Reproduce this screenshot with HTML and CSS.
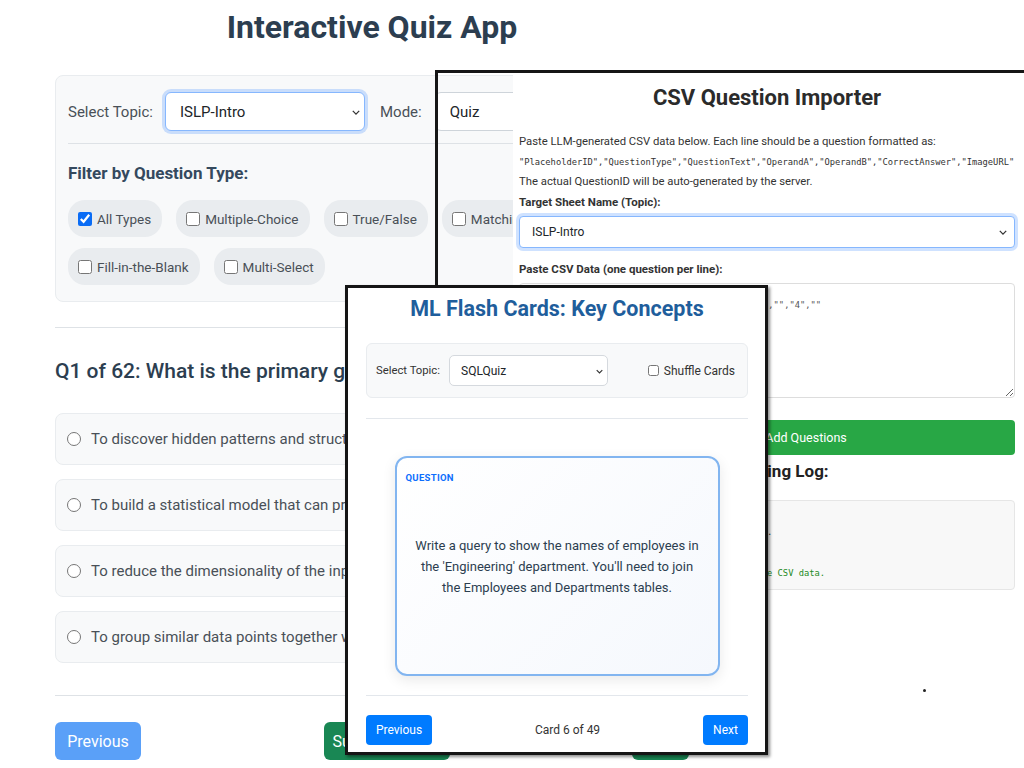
FILE: index.html
```html
<!DOCTYPE html>
<html lang="en">
<head>
<meta charset="utf-8">
<title>Interactive Quiz App</title>
<link rel="stylesheet" href="styles.css">
</head>
<body>
<main class="quiz-app">
  <h1 class="quiz-title">Interactive Quiz App</h1>
  <section class="quiz-controls">
    <div class="control-row">
      <label class="control-label" for="topic">Select Topic:</label>
      <div class="select-wrap topic-select">
        <select id="topic" class="select is-focused"><option>ISLP-Intro</option></select>
        <svg class="chevron" viewBox="0 0 10 6" width="8" height="5"><path d="M1 1l4 4 4-4" fill="none" stroke="#333" stroke-width="1.6"/></svg>
      </div>
      <label class="control-label mode-label" for="mode">Mode:</label>
      <div class="select-wrap mode-select">
        <select id="mode" class="select"><option>Quiz</option></select>
      </div>
    </div>
    <hr class="divider">
    <h2 class="filter-title">Filter by Question Type:</h2>
    <div class="chips">
      <label class="chip"><input type="checkbox" checked>All Types</label>
      <label class="chip"><input type="checkbox">Multiple-Choice</label>
      <label class="chip"><input type="checkbox">True/False</label>
      <label class="chip"><input type="checkbox">Matching</label>
      <label class="chip"><input type="checkbox">Fill-in-the-Blank</label>
      <label class="chip"><input type="checkbox">Multi-Select</label>
    </div>
  </section>
  <hr class="divider section-divider">
  <h2 class="question-title">Q1 of 62: What is the primary goal of unsupervised learning?</h2>
  <ul class="options">
    <li class="option"><input type="radio" name="answer"><span>To discover hidden patterns and structures in unlabeled data</span></li>
    <li class="option"><input type="radio" name="answer"><span>To build a statistical model that can predict an output from inputs</span></li>
    <li class="option"><input type="radio" name="answer"><span>To reduce the dimensionality of the input features</span></li>
    <li class="option"><input type="radio" name="answer"><span>To group similar data points together without labels</span></li>
  </ul>
  <hr class="divider nav-divider">
  <div class="quiz-nav">
    <button class="btn btn-prev" disabled>Previous</button>
    <button class="btn btn-submit">Submit Answer</button>
    <button class="btn btn-next">Next</button>
  </div>
</main>

<section class="csv-window">
  <div class="csv-sheet">
    <h1 class="csv-title">CSV Question Importer</h1>
    <p class="csv-text first">Paste LLM-generated CSV data below. Each line should be a question formatted as:</p>
    <code class="csv-format">"PlaceholderID","QuestionType","QuestionText","OperandA","OperandB","CorrectAnswer","ImageURL"</code>
    <p class="csv-text">The actual QuestionID will be auto-generated by the server.</p>
    <label class="csv-label" for="sheet">Target Sheet Name (Topic):</label>
    <div class="select-wrap csv-select-wrap">
      <select id="sheet" class="select csv-select is-focused"><option>ISLP-Intro</option></select>
      <svg class="chevron" viewBox="0 0 10 6" width="8" height="5"><path d="M1 1l4 4 4-4" fill="none" stroke="#333" stroke-width="1.6"/></svg>
    </div>
    <label class="csv-label second" for="csvdata">Paste CSV Data (one question per line):</label>
    <textarea id="csvdata" class="csv-textarea">"1","Fill-in-the-Blank","What is 2 + 2 = ?","","","4",""</textarea>
    <button class="csv-btn">Validate and Add Questions</button>
    <h2 class="csv-log-title">Processing Log:</h2>
    <div class="csv-log"><div>[INFO] Importer initialized. Awaiting input...</div><div>&nbsp;</div><div class="log-ok">Waiting for input... Please paste and validate CSV data.</div></div>
    <span class="speck"></span>
  </div>
</section>

<section class="flash-window">
  <h1 class="flash-title">ML Flash Cards: Key Concepts</h1>
  <div class="flash-controls">
    <div class="flash-topic">
      <label for="ftopic">Select Topic:</label>
      <div class="select-wrap flash-select-wrap">
        <select id="ftopic" class="select flash-select"><option>SQLQuiz</option></select>
        <svg class="chevron" viewBox="0 0 10 6" width="7" height="5"><path d="M1 1l4 4 4-4" fill="none" stroke="#333" stroke-width="1.6"/></svg>
      </div>
    </div>
    <label class="shuffle"><input type="checkbox">Shuffle Cards</label>
  </div>
  <hr class="flash-divider">
  <article class="flashcard">
    <span class="card-badge">QUESTION</span>
    <p class="card-text">Write a query to show the names of employees in the 'Engineering' department. You'll need to join the Employees and Departments tables.</p>
  </article>
  <hr class="flash-divider bottom">
  <div class="flash-nav">
    <button class="flash-btn prev">Previous</button>
    <span class="card-count">Card 6 of 49</span>
    <button class="flash-btn next">Next</button>
  </div>
</section>
</body>
</html>
```

FILE: styles.css
```css
* { box-sizing: border-box; }
html, body { margin: 0; padding: 0; }
body {
  width: 1024px;
  height: 768px;
  overflow: hidden;
  position: relative;
  background: #ffffff;
  font-family: Roboto, "Noto Sans", "Liberation Sans", sans-serif;
  color: #2c3e50;
}
input, select, textarea, button { font: inherit; color: inherit; margin: 0; }

/* ---------- Quiz app (background) ---------- */
.quiz-app { width: 634px; margin-left: 55px; }
.quiz-title {
  margin: 0;
  padding-top: 8px;
  font-size: 32px;
  line-height: 38px;
  font-weight: 700;
  text-align: center;
  color: #2c3e50;
}
.quiz-controls {
  margin-top: 29px;
  background: #f8f9fa;
  border: 1px solid #e9ecef;
  border-radius: 8px;
  padding: 16px 12px;
}
.control-row { display: flex; align-items: center; height: 39px; }
.control-label { font-size: 15px; color: #495057; white-space: nowrap; }
.select-wrap { position: relative; }
.topic-select { width: 200px; margin-left: 12px; }
.topic-select .chevron { right: 5px; }
.mode-label { margin-left: 15px; }
.mode-select { flex: 1; margin-left: 13px; }
.select {
  appearance: none;
  -webkit-appearance: none;
  display: block;
  width: 100%;
  height: 39px;
  border: 1px solid #ced4da;
  border-radius: 6px;
  background: #ffffff;
  padding: 0 28px 0 14px;
  font-size: 15px;
  color: #212529;
}
.is-focused { border-color: #86b7fe; box-shadow: 0 0 0 3px rgba(13, 110, 253, 0.2); }
.chevron { position: absolute; right: 8px; top: 50%; margin-top: -2px; }

.divider { border: 0; border-top: 1px solid #dee2e6; margin: 12px 0 0; height: 0; }
.filter-title {
  margin: 18px 0 0;
  font-size: 17px;
  line-height: 22px;
  font-weight: 700;
  color: #34495e;
}
.chips { display: flex; flex-wrap: wrap; gap: 11px 14px; margin-top: 16px; }
.chip {
  height: 37px;
  display: inline-flex;
  align-items: center;
  gap: 5px;
  padding: 0 11px 0 10px;
  background: #e9ecef;
  border-radius: 17px;
  font-size: 13.5px;
  color: #495057;
}
.chip input { width: 14px; height: 14px; accent-color: #0a6cf5; }

.section-divider { margin-top: 25px; }
.question-title {
  margin: 29px 0 0;
  font-size: 21px;
  line-height: 28px;
  font-weight: 500;
  color: #2c3e50;
  white-space: nowrap;
}
.options { list-style: none; margin: 28px 0 0; padding: 0; display: flex; flex-direction: column; gap: 14px; }
.option {
  height: 52px;
  display: flex;
  align-items: center;
  gap: 10px;
  padding-left: 11px;
  background: #f8f9fa;
  border: 1px solid #e9ecef;
  border-radius: 8px;
  font-size: 15px;
  color: #495057;
  white-space: nowrap;
}
.option input { width: 14px; height: 14px; flex: none; }
.nav-divider { margin-top: 32px; }
.quiz-nav { display: flex; justify-content: space-between; margin-top: 26px; }
.btn {
  height: 38px;
  border: 0;
  border-radius: 6px;
  color: #ffffff;
  font-size: 16px;
  padding: 0;
}
.btn-prev { width: 86px; background: #5aa0f8; }
.btn-submit { width: 126px; background: #198754; }
.btn-next { width: 57px; background: #198754; }

/* ---------- CSV importer window ---------- */
.csv-window {
  position: absolute;
  left: 435px;
  top: 70px;
  right: 0;
  height: 682px;
  border-top: 3px solid #161616;
  border-left: 3px solid #161616;
}
.csv-sheet {
  position: relative;
  margin-left: 75px;
  height: 100%;
  background: #ffffff;
  padding: 11px 9px 0 6px;
  color: #333333;
}
.csv-title {
  margin: 0;
  text-align: center;
  font-size: 22px;
  line-height: 28px;
  font-weight: 700;
  color: #2b2b2b;
}
.csv-text { margin: 0; font-size: 11.3px; line-height: 20px; }
.csv-text.first { margin-top: 20px; }
.csv-format {
  display: block;
  font-family: "DejaVu Sans Mono", "Liberation Mono", monospace;
  font-size: 8.75px;
  line-height: 20px;
  white-space: nowrap;
  color: #333333;
}
.csv-label { display: block; font-size: 11.5px; line-height: 20px; font-weight: 700; color: #333333; }
.csv-label.second { margin-top: 11px; }
.csv-select-wrap { margin-top: 4px; }
.csv-select { height: 32px; font-size: 12px; padding-left: 12px; border-radius: 4px; }
.csv-textarea {
  display: block;
  width: 100%;
  height: 115px;
  margin-top: 4px;
  border: 1px solid #dddddd;
  border-radius: 4px;
  padding: 13px 6px 6px;
  font-family: "DejaVu Sans Mono", "Liberation Mono", monospace;
  font-size: 8.75px;
  line-height: 16px;
  color: #555555;
  white-space: pre;
  overflow: hidden;
  resize: vertical;
}
.csv-btn {
  display: block;
  width: 100%;
  height: 35px;
  margin-top: 22px;
  border: 0;
  border-radius: 4px;
  background: #28a745;
  color: #ffffff;
  font-size: 12.5px;
  padding: 0 0 0 6px;
}
.csv-log-title {
  margin: 5px 0 0;
  text-align: center;
  font-size: 17px;
  line-height: 22px;
  font-weight: 700;
  color: #222222;
}
.csv-log {
  margin-top: 18px;
  height: 90px;
  background: #f8f8f8;
  border: 1px solid #e6e6e6;
  border-radius: 4px;
  padding: 21px 10px 0;
  font-family: "DejaVu Sans Mono", "Liberation Mono", monospace;
  font-size: 8.75px;
  line-height: 20.5px;
  white-space: nowrap;
  color: #333333;
}
.log-ok { color: #1f8a1f; }
.speck {
  position: absolute;
  left: 410px;
  top: 616px;
  width: 3px;
  height: 3px;
  border-radius: 50%;
  background: #222222;
}

/* ---------- Flash cards window ---------- */
.flash-window {
  position: absolute;
  left: 345px;
  top: 285px;
  width: 423px;
  height: 470px;
  background: #ffffff;
  border: 3px solid #151515;
  box-shadow: 2px 2px 3px rgba(0, 0, 0, 0.45);
  padding: 7px 17px 0 18px;
}
.flash-title {
  margin: 0;
  text-align: center;
  font-size: 21.5px;
  line-height: 28px;
  font-weight: 700;
  color: #1f5e9c;
}
.flash-controls {
  margin-top: 20px;
  height: 55px;
  background: #f8f9fa;
  border: 1px solid #e9ecef;
  border-radius: 6px;
  padding: 0 12px 0 9px;
  display: flex;
  align-items: center;
  justify-content: space-between;
}
.flash-topic { display: flex; align-items: center; gap: 9px; font-size: 11.3px; color: #333333; }
.flash-select-wrap { width: 159px; }
.flash-select-wrap .chevron { right: 5px; }
.flash-select { height: 31px; font-size: 12px; padding-left: 11px; border-radius: 5px; border-color: #d5d9de; }
.shuffle { display: flex; align-items: center; gap: 5px; font-size: 12px; color: #333333; }
.shuffle input { width: 11px; height: 11px; }
.flash-divider { border: 0; border-top: 1px solid #e3e7ec; margin: 20px 0 0; height: 0; }
.flash-divider.bottom { margin-top: 19px; }
.flashcard {
  position: relative;
  width: 325px;
  height: 220px;
  margin: 37px auto 0;
  border: 2px solid #82b5f0;
  border-radius: 12px;
  background: linear-gradient(135deg, #ffffff, #f5f8fd);
  box-shadow: 0 4px 14px rgba(0, 0, 0, 0.09);
  display: flex;
  align-items: center;
  justify-content: center;
  padding: 0 17px;
}
.card-badge {
  position: absolute;
  left: 9px;
  top: 14px;
  font-size: 9.5px;
  font-weight: 700;
  letter-spacing: 0.3px;
  color: #0d6efd;
}
.card-text { margin: 0; text-align: center; font-size: 13px; line-height: 21px; color: #2c3e50; }
.flash-nav { margin-top: 19px; display: flex; align-items: center; justify-content: space-between; }
.flash-btn {
  height: 30px;
  border: 0;
  border-radius: 4px;
  background: #007bff;
  color: #ffffff;
  font-size: 12px;
  padding: 0;
}
.flash-btn.prev { width: 66px; }
.flash-btn.next { width: 45px; }
.card-count { font-size: 12px; color: #333333; }
```
